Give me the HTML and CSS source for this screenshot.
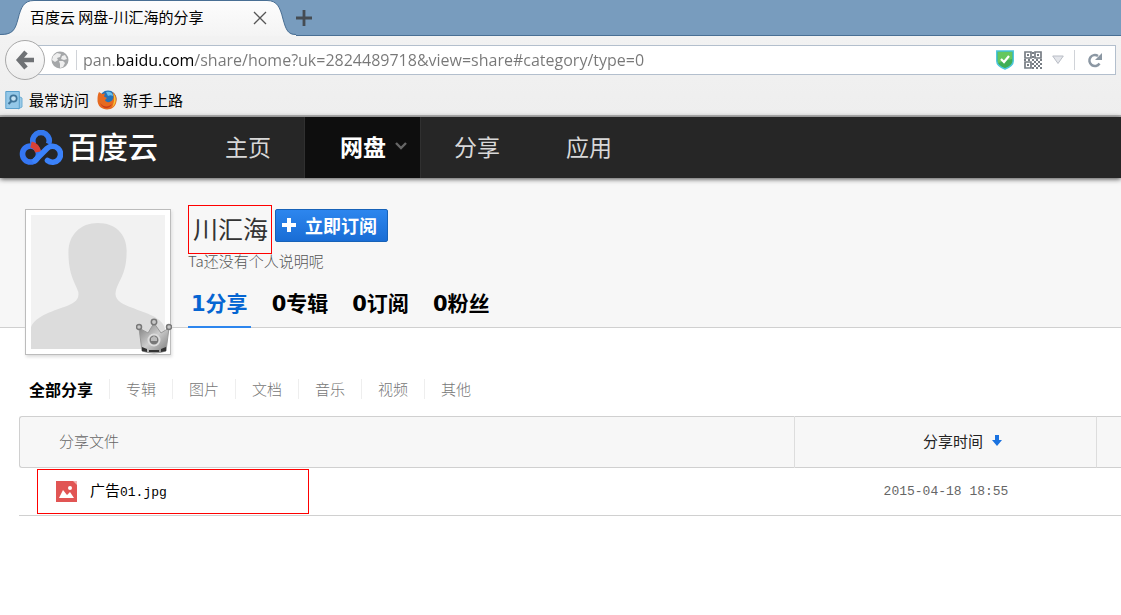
FILE: index.html
```html
<!DOCTYPE html>
<html lang="zh-CN">
<head>
<meta charset="utf-8">
<title>百度云 网盘-川汇海的分享</title>
<link rel="stylesheet" href="styles.css">
</head>
<body>
<div class="browser">
  <div class="tabstrip">
    <div class="tab">
      <svg class="tab-shape" width="296" height="36" viewBox="0 0 296 36" aria-hidden="true">
        <defs><linearGradient id="tabfill" x1="0" y1="0" x2="0" y2="1"><stop offset="0" stop-color="#fdfdfd"/><stop offset="1" stop-color="#f4f4f4"/></linearGradient></defs>
        <path d="M0 35C13 35 15 30 18 19C21 7 24 .5 34 .5H267C277 .5 280 7 283 19C286 30 288 35 296 35V36H0Z" fill="url(#tabfill)"/>
        <path d="M0 34.5C13 34.5 15 30 18 19C21 7 24 .5 34 .5H267C277 .5 280 7 283 19C286 30 288 34.5 296 34.5" fill="none" stroke="#496f94"/>
      </svg>
      <span class="tab-title">百度云 网盘-川汇海的分享</span>
      <button class="plain" aria-label="关闭标签页"><svg width="14" height="14" viewBox="0 0 14 14"><path d="M1 1l12 12M13 1L1 13" stroke="#555" stroke-width="1.3"/></svg></button>
    </div>
    <button class="plain" aria-label="新标签页"><svg width="16" height="16" viewBox="0 0 16 16"><path d="M8 0v16M0 8h16" stroke="#454c53" stroke-width="2.8"/></svg></button>
  </div>

  <div class="toolbar">
    <button class="back" aria-label="后退"><svg width="20" height="20" viewBox="0 0 20 20"><path d="M11 2L4 10l7 8M5 10h14" fill="none" stroke="#6f7275" stroke-width="4.600"/></svg></button>
    <div class="urlbar">
      <svg class="globe" width="18" height="18" viewBox="0 0 18 18" aria-hidden="true"><circle cx="9" cy="9" r="8.5" fill="#a5a7a9"/><path d="M2 5l4-3 4 1-1 3-3 1 1 2-3 2-3-2zM11 5l3-1 2 4-3 1-3-1zM8 10l4 0 2 2-2 4-3 1 0-4z" fill="#eee"/></svg>
      <span class="rule"></span>
      <input class="url" type="text" aria-label="网址" value="pan.baidu.com/share/home?uk=2824489718&amp;view=share#category/type=0">
      <svg width="18" height="20" viewBox="0 0 18 20" aria-hidden="true"><path d="M.8 1H17.2V11C17.2 15 13 17.500 9 19C5 17.500 .8 15 .8 11Z" fill="#3fae55" stroke="#4cc6dc" stroke-width="1.5"/><path d="M2 2h14v7L2 13z" fill="#65c75e"/><path d="M5 9l3 3 5-6" fill="none" stroke="#fff" stroke-width="2.2"/></svg>
      <svg width="18" height="18" viewBox="0 0 18 18" aria-hidden="true"><g fill="none" stroke="#777d84" stroke-width="1.7"><path d="M1 1h6v6H1zM11 1h6v6h-6zM1 11h6v6H1z"/></g><path d="M3 3h2v2H3zM13 3h2v2h-2zM3 13h2v2H3zM8 1h2v2H8zM8 5h2v2H8zM0 8h2v2H0zM4 8h2v2H4zM8 8h2v2H8zM12 8h2v2h-2zM16 8h2v2h-2zM10 10h2v2h-2zM14 10h2v2h-2zM8 12h2v2H8zM12 12h2v2h-2zM16 12h2v2h-2zM10 14h2v2h-2zM14 14h2v2h-2zM8 16h2v2H8zM12 16h2v2h-2zM16 16h2v2h-2z" fill="#777d84"/></svg>
      <svg width="12" height="10" viewBox="0 0 12 10" aria-hidden="true"><path d="M.7 1h10.600L6 8.500z" fill="#e3e5ea" stroke="#b9bdc5"/></svg>
      <span class="rule"></span>
      <button class="plain reload" aria-label="重新加载"><svg width="16" height="16" viewBox="0 0 16 16"><path d="M12.500 11.500A5.500 5.500 0 1 1 11 4" fill="none" stroke="#8b97a3" stroke-width="2.500"/><path d="M15 1v7H8z" fill="#8b97a3"/></svg></button>
    </div>
  </div>

  <div class="bookmarks">
    <a href="#"><svg width="18" height="20" viewBox="0 0 18 20"><path d="M13 6l4 2v9l-4 2z" fill="#9ccbe8" stroke="#6fadd3"/><path d="M.8 1.500h13.500v17H.8z" fill="#94c8e8" stroke="#5ba0cc"/><circle cx="8.500" cy="8.500" r="3.200" fill="#c4e2f3" stroke="#3f7499" stroke-width="1.700"/><path d="M6.500 11L3.500 14" stroke="#3f7499" stroke-width="2.200"/></svg>最常访问</a>
    <a href="#"><svg width="20" height="20" viewBox="0 0 20 20"><circle cx="11" cy="9" r="8.500" fill="#2473b9"/><path d="M9 2c4-1 7 1 7 4-2-1-3-1-5 0z" fill="#6bc0ec"/><path d="M2 2l3 2 3-.5-1 3 3 1.500-2 2c1 3 6 3 8-1 1-3 .5-5-1-7 4 2 5 6 4.500 9C19 16 15 19.500 10 19.500S0 16 .5 9C.5 6 1 4 2 2z" fill="#e66a20"/><path d="M16 3c4 4 3.500 11-1 14.500 2-4 3-9 1-14.500z" fill="#f8c638"/><path d="M3 13c4 5 9 4 12 1-2 5-9 6-12-1z" fill="#c93b19"/></svg>新手上路</a>
  </div>
</div>

<header class="site-header">
  <a class="logo" href="#" aria-label="百度云">
    <svg width="44" height="36" viewBox="0 0 44 36" aria-hidden="true"><g fill="none" stroke-width="5.600"><circle cx="11.500" cy="24" r="8" stroke="#3576f2"/><path d="M14.500 14A8.200 8.200 0 1 1 29.500 14" stroke="#3478ee"/><path d="M12 14.500Q18 16 19 22" stroke="#d84236" stroke-width="6"/><path d="M16 30.500L28 18.500A8 8 0 1 1 28.500 30.500" stroke="#3b82fa" stroke-linecap="round"/></g></svg>
    <span class="logo-text">百度云</span>
  </a>
  <nav class="main-nav">
    <a href="#">主页</a>
    <a href="#" class="current">网盘<svg width="14" height="10" viewBox="0 0 14 10" aria-hidden="true"><path d="M2 2l5 5 5-5" fill="none" stroke="#666" stroke-width="2.400"/></svg></a>
    <a href="#">分享</a>
    <a href="#">应用</a>
  </nav>
</header>

<section class="profile">
  <div class="avatar">
    <svg class="portrait" viewBox="0 0 136 136" role="img" aria-label="头像"><path fill="#f2f2f2" d="M0 0h136v136H0z"/><path d="M0 136V114C4 102 24 97 37 92C46 88 49 85 48 78C45 69 38 61 38 38C38 20 50 8 68 8S98 20 97 38C97 61 88 67 86 78C84 87 94 91 102 94C117 100 134 104 136 116V136Z" fill="#dcdcdc"/></svg>
    <svg class="crown" width="36" height="36" viewBox="0 0 36 36" aria-hidden="true"><defs><linearGradient id="metal" x1="0" y1="0" x2="1" y2="1"><stop offset="0" stop-color="#777"/><stop offset=".5" stop-color="#ccc"/><stop offset="1" stop-color="#777"/></linearGradient></defs><path d="M3 10l9 5 6-10 7 10 8-5-3 23q-12 4-24 0z" fill="url(#metal)" stroke="#999"/><path d="M6 29l5 2v3l-5-1zM13 32h10v2H13zM25 31l5-2v4l-5 1z" fill="#333"/><g fill="#c8c8c8" stroke="#777" stroke-width="1.500"><circle cx="3" cy="9" r="2.500"/><circle cx="18" cy="4" r="2.700"/><circle cx="33" cy="9" r="2.500"/></g><circle cx="18" cy="22" r="5.500" fill="#777" stroke="#ddd" stroke-width="2"/><path d="M15 23v-3l3-2 3 2v3z" fill="#bbb"/></svg>
  </div>
  <div class="info">
    <div class="name-row">
      <h1 class="name">川汇海</h1>
      <button class="subscribe"><svg width="14" height="14" viewBox="0 0 14 14" aria-hidden="true"><path d="M7 0v14M0 7h14" stroke="#fff" stroke-width="4"/></svg>立即订阅</button>
    </div>
    <p class="bio">Ta还没有个人说明呢</p>
    <nav class="stats">
      <a href="#" class="active">1分享</a>
      <a href="#">0专辑</a>
      <a href="#">0订阅</a>
      <a href="#">0粉丝</a>
    </nav>
  </div>
</section>

<main class="content">
  <nav class="filters">
    <a href="#" class="active">全部分享</a>
    <a href="#">专辑</a>
    <a href="#">图片</a>
    <a href="#">文档</a>
    <a href="#">音乐</a>
    <a href="#">视频</a>
    <a href="#">其他</a>
  </nav>
  <table class="files">
    <colgroup><col><col class="col-time"><col class="col-extra"></colgroup>
    <thead>
      <tr><th class="head-file" scope="col">分享文件</th><th class="head-time" scope="col">分享时间<svg width="10" height="12" viewBox="0 0 10 12" aria-hidden="true"><path d="M3 0h4v5h3L5 11 0 5h3z" fill="#1b73e0"/></svg></th><td></td></tr>
    </thead>
    <tbody>
      <tr>
        <td class="cell-file"><a class="file" href="#"><svg width="21" height="21" viewBox="0 0 21 21" aria-hidden="true"><path d="M0 0h18l3 3v18H0z" fill="#e15554"/><path d="M17 0l4 4V0z" fill="#f3b5b4"/><path d="M3 17l4-8 4 5 3-3 4 6z" fill="#fff"/><circle cx="14" cy="7" r="2" fill="#fff"/></svg><span>广告<span class="mono">01.jpg</span></span></a></td>
        <td class="cell-time">2015-04-18 18:55</td><td></td>
      </tr>
    </tbody>
  </table>
</main>
</body>
</html>
```
FILE: styles.css
```css
* { box-sizing: border-box; }
body {
  margin: 0;
  background: #fff;
  color: #000;
  font-family: "Noto Sans CJK SC", sans-serif;
  font-size: 15px;
  line-height: 20px;
  overflow-x: hidden;
}
a { color: inherit; text-decoration: none; }
svg { flex: none; display: block; }
.plain { border: 0; padding: 0; background: none; }

.browser { background: linear-gradient(#f4f4f4, #eee); border-bottom: 2px solid #b9b9b9; }
.tabstrip {
  display: flex;
  align-items: center;
  gap: 1px;
  height: 36px;
  background: #789cbe;
  border-bottom: 1px solid #496f94;
}
.tab {
  position: relative;
  display: flex;
  align-items: center;
  justify-content: space-between;
  width: 295px;
  height: 36px;
  padding: 0 28px 0 30px;
  align-self: flex-start;
}
.tab-shape { position: absolute; left: 0; top: 0; }
.tab-title, .tab .plain { position: relative; }
.tab-title { padding-bottom: 2px; }

.toolbar { display: flex; align-items: center; height: 49px; padding: 0 5px 2px; }
.back {
  display: flex;
  align-items: center;
  justify-content: center;
  width: 40px;
  height: 40px;
  padding: 0;
  border: 1px solid #a8a8a8;
  border-radius: 50%;
  background: linear-gradient(#fcfcfc, #ededed);
  z-index: 1;
}
.urlbar {
  display: flex;
  align-items: center;
  gap: 10px;
  flex: 1;
  height: 30px;
  margin-left: -8px;
  padding: 0 12px 0 13px;
  background: #fff;
  border: 1px solid #b3bfcd;
}
.rule { width: 1px; height: 20px; background: #d0d3d8; }
.globe + .rule { margin: 0 -4px 0 -3px; }
.url {
  flex: 1;
  min-width: 0;
  border: 0;
  padding: 0;
  outline: 0;
  font-family: "Open Sans", sans-serif;
  font-size: 16px;
  color: transparent;
  background: linear-gradient(to right, #777 33px, #000 33px, #000 111px, #777 111px);
  background-clip: text;
  -webkit-background-clip: text;
}
.reload { margin-left: 2px; }

.bookmarks { display: flex; align-items: flex-start; gap: 8px; height: 30px; padding: 5px 5px 0; }
.bookmarks a { display: flex; align-items: center; gap: 6px; }

.site-header {
  position: relative;
  display: flex;
  height: 61px;
  background: #262626;
  box-shadow: 0 1px 5px #444;
}
.logo {
  display: flex;
  align-items: center;
  gap: 5px;
  width: 192px;
  padding-left: 19px;
  color: #fff;
}
.logo-text { padding-bottom: 5px; font-size: 30px; font-weight: 500; line-height: 40px; }
.main-nav { display: flex; color: #d8d8d8; font-size: 23px; }
.main-nav a {
  display: flex;
  align-items: center;
  gap: 8px;
  padding: 0 33px 3px;
}
.main-nav .current {
  padding: 0 12px 3px 35px;
  background: #0e0e0e;
  border-right: 1px solid #303030;
  border-left: 1px solid #303030;
  color: #fff;
  font-weight: 700;
}

.profile {
  display: flex;
  gap: 17px;
  height: 150px;
  padding: 27px 25px 0;
  background: #f7f7f7;
  border-bottom: 1px solid #d0d0d0;
}
.avatar {
  position: relative;
  flex: none;
  width: 146px;
  height: 146px;
  margin-top: 4px;
  padding: 5px;
  background: #fff;
  border: 1px solid #bcbcbc;
  box-shadow: 1px 2px 3px #ddd;
}
.crown { position: absolute; right: -2px; bottom: 0; }
.info { display: flex; flex-direction: column; }
.name-row { display: flex; align-items: flex-start; gap: 3px; }
.name {
  margin: 0;
  padding: 3px 3px 5px 4px;
  border: 1px solid #f00;
  color: #333;
  font-size: 25px;
  font-weight: 400;
  line-height: 39px;
}
.subscribe {
  display: flex;
  align-items: center;
  gap: 9px;
  height: 33px;
  margin-top: 4px;
  padding: 0 10px 2px 6px;
  border: 1px solid #1762b8;
  border-radius: 2px;
  background: linear-gradient(#2d86ee, #196dd5);
  color: #fff;
  font-family: "Noto Sans CJK SC", sans-serif;
  font-size: 18px;
  font-weight: 700;
}
.bio { margin: -3px 0 0; color: #555; font-weight: 300; }
.stats { display: flex; gap: 18px; margin-top: 9px; }
.stats a {
  padding: 10px 3px 8px;
  border-bottom: 2px solid transparent;
  font-family: "DejaVu Sans", "Noto Sans CJK SC", sans-serif;
  font-size: 21px;
  font-weight: 700;
  line-height: 28px;
}
.stats .active { color: #0565d2; border-color: #2d86ee; }

.content { padding: 48px 0 0 19px; }
.filters { display: flex; padding: 3px 0 0 10px; color: #777; font-weight: 300; }
.filters a { padding: 0 16px; border-left: 1px solid #eee; }
.filters .active { padding-left: 0; border: 0; color: #000; font-size: 16px; font-weight: 700; }

.files {
  width: 100%;
  margin-top: 17px;
  table-layout: fixed;
  border-collapse: separate;
  border-spacing: 0;
}
.col-time { width: 302px; }
.col-extra { width: 24px; }
.files th, .files td { padding: 0; }
.files thead th, .files thead td {
  height: 52px;
  padding-bottom: 3px;
  background: #f7f7f7;
  border-top: 1px solid #d0d0d0;
  border-bottom: 1px solid #d0d0d0;
  border-right: 1px solid #ddd;
  font-weight: 300;
}
.files thead td { border-right: 0; }
.files .head-file {
  padding-left: 39px;
  border-left: 1px solid #d0d0d0;
  border-radius: 3px 0 0 3px;
  color: #666;
  text-align: left;
}
.files .head-time { padding-left: 34px; font-weight: 400; color: #222; }
.head-time svg { display: inline-block; margin-left: 9px; }
.files tbody td { height: 48px; border-bottom: 1px solid #d0d0d0; }
.files .cell-file { padding-left: 18px; }
.file {
  display: flex;
  align-items: center;
  gap: 13px;
  width: 272px;
  height: 45px;
  padding-left: 18px;
  border: 1px solid #f00;
}
.mono, .cell-time { font-family: "Liberation Mono", monospace; font-size: 13px; }
.cell-time { color: #666; text-align: center; }
```
